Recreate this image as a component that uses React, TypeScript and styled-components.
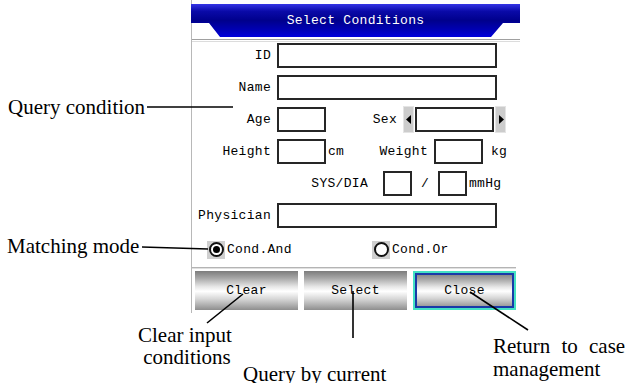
import type { FC } from "react";
import styled, { createGlobalStyle } from "styled-components";

const GlobalStyle = createGlobalStyle`
  body {
    margin: 0;
    background: #ffffff;
  }
`;

const Page = styled.div`
  position: relative;
  width: 625px;
  height: 383px;
  overflow: hidden;
  background: #ffffff;
  font-family: "Liberation Mono", "DejaVu Sans Mono", monospace;
  font-size: 13px;
  letter-spacing: 0.3px;
  color: #000000;
`;

const Panel = styled.div`
  margin-left: 191px;
  width: 329px;
  height: 313px;
  box-sizing: border-box;
  border-left: 1px solid #b8b8b8;
  padding-top: 4px;
  display: flex;
  flex-direction: column;
`;

const TitleBar = styled.div`
  height: 33px;
  margin-left: -1px;
  display: flex;
  align-items: center;
  justify-content: center;
  color: #ffffff;
  background: linear-gradient(
    to bottom,
    #3434e6 0%,
    #0a0aa8 22%,
    #00008c 50%,
    #0000b4 78%,
    #0000dc 100%
  );
  clip-path: polygon(
    0 0,
    100% 0,
    100% 19px,
    calc(100% - 17px) 19px,
    calc(100% - 29px) 100%,
    29px 100%,
    18px 19px,
    0 19px
  );
`;

const HeaderRule = styled.div`
  margin-top: 2px;
  height: 1px;
  background: #a0a0a0;
  box-shadow: 0 2px 0 #dcdcdc;
`;

const Form = styled.div`
  display: flex;
  flex-direction: column;
  gap: 7px;
  padding-top: 3px;
`;

const Row = styled.div`
  display: flex;
  align-items: center;
  height: 25px;
`;

const Label = styled.span<{ $w?: number; $mr?: number }>`
  width: ${(p) => (p.$w ? `${p.$w}px` : "auto")};
  margin-right: ${(p) => p.$mr ?? 6}px;
  text-align: right;
  white-space: nowrap;
`;

const Field = styled.div<{ $w: number }>`
  width: ${(p) => p.$w}px;
  height: 25px;
  box-sizing: border-box;
  border: 2px solid #262626;
  background: #ffffff;
`;

const Unit = styled.span<{ $w?: number; $ml?: number }>`
  width: ${(p) => (p.$w ? `${p.$w}px` : "auto")};
  margin-left: ${(p) => p.$ml ?? 2}px;
  white-space: nowrap;
`;

const Slash = styled.span`
  width: 26px;
  text-align: center;
`;

const Spin = styled.div`
  display: flex;
  align-items: center;
  gap: 1px;
`;

const Arrow = styled.div`
  width: 11px;
  height: 27px;
  box-sizing: border-box;
  background: #cccccc;
  border: 1px solid #e4e4e4;
  display: flex;
  align-items: center;
  justify-content: center;
`;

const RadioRow = styled.div`
  display: flex;
  align-items: center;
  height: 19px;
  margin-top: 12px;
  padding-left: 15px;
`;

const RadioItem = styled.div<{ $w?: number }>`
  width: ${(p) => (p.$w ? `${p.$w}px` : "auto")};
  display: flex;
  align-items: center;
  gap: 2px;
`;

const RadioBox = styled.div`
  width: 18px;
  height: 18px;
  background: #cfcfcf;
  display: flex;
  align-items: center;
  justify-content: center;
`;

const RadioCircle = styled.div<{ $on?: boolean }>`
  width: 15px;
  height: 15px;
  box-sizing: border-box;
  border-radius: 50%;
  border: 2px solid #111111;
  background: #ffffff;
  display: flex;
  align-items: center;
  justify-content: center;
  &::after {
    content: "";
    width: 7px;
    height: 7px;
    border-radius: 50%;
    background: ${(p) => (p.$on ? "#000000" : "transparent")};
  }
`;

const Separator = styled.div`
  margin-top: 8px;
  width: 324px;
  height: 1px;
  background: #b4b4b4;
  box-shadow: 0 1px 0 #e0e0e0;
`;

const ButtonRow = styled.div`
  display: flex;
  gap: 6px;
  padding-left: 3px;
  margin-top: 3px;
`;

const Button = styled.div<{ $focus?: boolean }>`
  width: 103px;
  height: 39px;
  box-sizing: border-box;
  display: flex;
  align-items: center;
  justify-content: center;
  background: linear-gradient(
    to bottom,
    #7c7c7c 0%,
    #a6a6a6 18%,
    #e6e6e6 40%,
    #ffffff 52%,
    #d6d6d6 72%,
    #8e8e8e 100%
  );
  border: ${(p) => (p.$focus ? "2px solid #44e2c4" : "none")};
  box-shadow: ${(p) => (p.$focus ? "inset 0 0 0 2px #1a3aa8" : "none")};
`;

const Note = styled.div<{ $x: number; $y: number; $lh?: number }>`
  position: absolute;
  left: ${(p) => p.$x}px;
  top: ${(p) => p.$y}px;
  font-family: "Liberation Serif", "Times New Roman", serif;
  font-size: 21px;
  line-height: ${(p) => p.$lh ?? 24}px;
  letter-spacing: 0;
  white-space: nowrap;
`;

const Callouts = styled.svg`
  position: absolute;
  left: 0;
  top: 0;
  pointer-events: none;
`;

const Tri: FC<{ dir: "left" | "right" }> = ({ dir }) => (
  <svg width="6" height="9" viewBox="0 0 6 9">
    <path d={dir === "left" ? "M5 0 L0 4.5 L5 9 Z" : "M1 0 L6 4.5 L1 9 Z"} fill="#000" />
  </svg>
);

const App: FC = () => (
  <Page>
    <GlobalStyle />
    <Panel>
      <TitleBar>Select Conditions</TitleBar>
      <HeaderRule />
      <Form>
        <Row>
          <Label $w={79}>ID</Label>
          <Field $w={220} />
        </Row>
        <Row>
          <Label $w={79}>Name</Label>
          <Field $w={220} />
        </Row>
        <Row>
          <Label $w={79}>Age</Label>
          <Field $w={49} />
          <Label $w={71}>Sex</Label>
          <Spin>
            <Arrow>
              <Tri dir="left" />
            </Arrow>
            <Field $w={79} />
            <Arrow>
              <Tri dir="right" />
            </Arrow>
          </Spin>
        </Row>
        <Row>
          <Label $w={79}>Height</Label>
          <Field $w={49} />
          <Unit $w={49}>cm</Unit>
          <Label $w={51}>Weight</Label>
          <Field $w={49} />
          <Unit $ml={8}>kg</Unit>
        </Row>
        <Row>
          <Label $w={176} $mr={15}>SYS/DIA</Label>
          <Field $w={29} />
          <Slash>/</Slash>
          <Field $w={29} />
          <Unit>mmHg</Unit>
        </Row>
        <Row>
          <Label $w={79}>Physician</Label>
          <Field $w={220} />
        </Row>
      </Form>
      <RadioRow>
        <RadioItem $w={165}>
          <RadioBox>
            <RadioCircle $on />
          </RadioBox>
          Cond.And
        </RadioItem>
        <RadioItem>
          <RadioBox>
            <RadioCircle />
          </RadioBox>
          Cond.Or
        </RadioItem>
      </RadioRow>
      <Separator />
      <ButtonRow>
        <Button>Clear</Button>
        <Button>Select</Button>
        <Button $focus>Close</Button>
      </ButtonRow>
    </Panel>

    <Note $x={8} $y={95}>Query condition</Note>
    <Note $x={7} $y={234}>Matching mode</Note>
    <Note $x={138} $y={324} $lh={22}>
      Clear input
      <br />
      &nbsp;conditions
    </Note>
    <Note $x={243} $y={362}>Query by current</Note>
    <Note $x={493} $y={335} $lh={23} style={{ wordSpacing: "6px" }}>
      Return to case
      <br />
      management
    </Note>

    <Callouts width={625} height={383}>
      <g stroke="#000" strokeWidth={1.6} fill="none">
        <line x1={147} y1={107} x2={233} y2={107} />
        <line x1={142} y1={247} x2={208} y2={249} />
        <line x1={207} y1={323} x2={243} y2={294} />
        <line x1={353} y1={291} x2={353} y2={338} />
        <line x1={470} y1={292} x2={528} y2={330} />
      </g>
    </Callouts>
  </Page>
);

export default App;
